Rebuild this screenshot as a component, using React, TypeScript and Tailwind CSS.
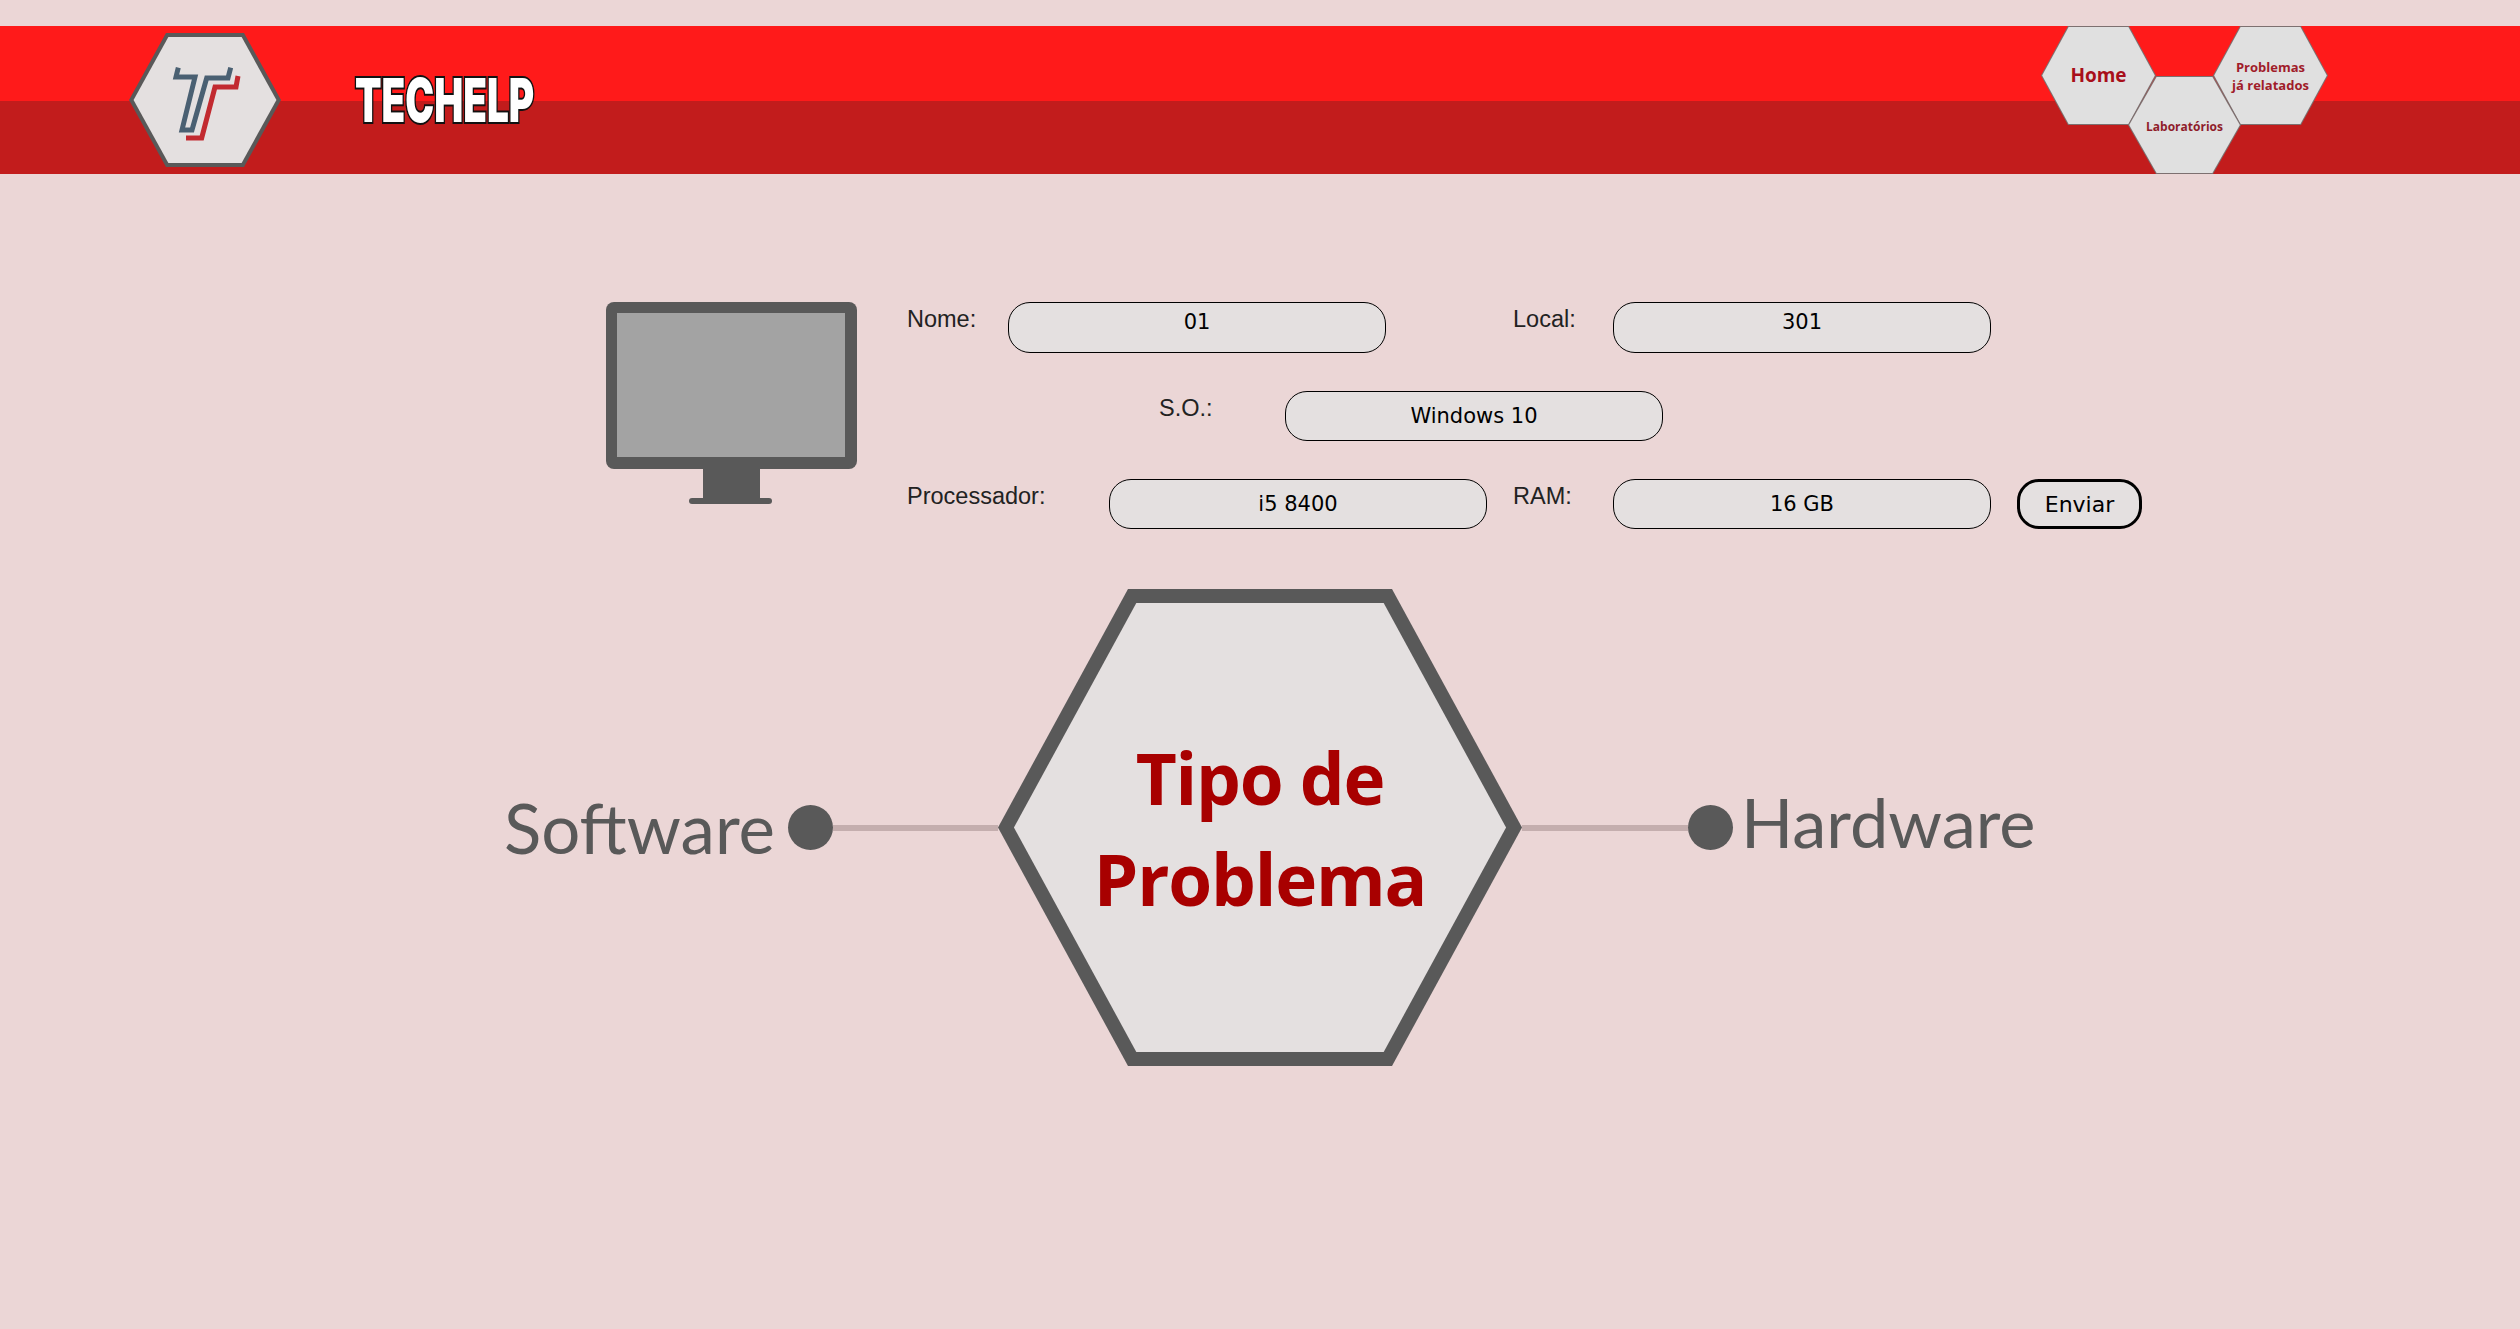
import React from "react";

function Hex({ w, h, inset, s, fill, stroke, className, children }: { w: number; h: number; inset: number; s: number; fill: string; stroke: string; className: string; children?: React.ReactNode }) {
  const b = h / 2;
  const L = Math.sqrt(inset * inset + b * b);
  const lx = (s * L) / b;
  const tx = lx + (inset * (b - s)) / b;
  const outer = `0,${b} ${inset},0 ${w - inset},0 ${w},${b} ${w - inset},${h} ${inset},${h}`;
  const inner = `${lx},${b} ${tx},${s} ${w - tx},${s} ${w - lx},${b} ${w - tx},${h - s} ${tx},${h - s}`;
  return (
    <div className={`relative flex shrink-0 items-center justify-center ${className}`}>
      <svg className="absolute inset-0" width={w} height={h} viewBox={`0 0 ${w} ${h}`}>
        <polygon points={outer} fill={stroke} />
        <polygon points={inner} fill={fill} />
      </svg>
      <div className="relative text-center">{children}</div>
    </div>
  );
}

function Field({ value, className }: { value: string; className: string }) {
  return (
    <div className={`flex shrink-0 items-center justify-center rounded-[22px] border border-black bg-[#e4e0e0] font-['DejaVu_Sans',sans-serif] text-[21px] text-black ${className}`}>
      {value}
    </div>
  );
}

function Label({ children, className }: { children: React.ReactNode; className: string }) {
  return <div className={`shrink-0 font-['Liberation_Sans',sans-serif] text-[23.5px] leading-[28px] text-[#222] ${className}`}>{children}</div>;
}

export default function App() {
  return (
    <div className="min-h-screen overflow-hidden bg-[#ebd6d6] pt-[26px]">
      <header className="flex h-[148px] bg-[linear-gradient(#ff1a1a_0,#ff1a1a_75px,#c21c1c_75px,#c21c1c_100%)]">
        <Hex w={152} h={134} inset={37} s={4} fill="#e4e0e0" stroke="#595959" className="ml-[129px] mt-[7px] h-[134px] w-[152px]">
          <svg width="90" height="90" viewBox="0 0 90 90" fill="none" strokeWidth="5">
            <polyline points="18.3,12.7 16,22 35,22 22,75 32,75 46.7,23 68,23 70.7,12.7" stroke="#4a6072" />
            <polyline points="78,21 76,32 55,32 41.7,83 26,83" stroke="#c22a30" />
          </svg>
        </Hex>
        <div className="ml-[74px] mt-[44px] h-[60px] w-[178px]">
          <span className="inline-block origin-top-left scale-x-[0.645] whitespace-nowrap font-['Inter',sans-serif] text-[60px] font-black leading-[60px] text-white [-webkit-text-stroke:4px_#111] [paint-order:stroke_fill]">
            TECHELP
          </span>
        </div>
        <nav className="ml-auto mr-[192px] flex h-full font-['Open_Sans',sans-serif] font-bold">
          <Hex w={115} h={99} inset={27} s={1} fill="#e0e0e0" stroke="#7d7070" className="h-[99px] w-[115px] self-start">
            <span className="text-[19px] text-[#a80f1a]">Home</span>
          </Hex>
          <Hex w={113} h={98} inset={28} s={1} fill="#e0e0e0" stroke="#7d7070" className="z-10 -ml-[28px] -mr-[28px] h-[98px] w-[113px] self-end">
            <span className="text-[12px] text-[#8f1c2a]">Laboratórios</span>
          </Hex>
          <Hex w={115} h={99} inset={27} s={1} fill="#e0e0e0" stroke="#7d7070" className="h-[99px] w-[115px] self-start">
            <span className="block text-[13px] leading-[18px] text-[#a01c2a]">Problemas<br />já relatados</span>
          </Hex>
        </nav>
      </header>

      <section className="ml-[606px] mt-[128px] flex items-start">
        <svg className="shrink-0" width="251" height="202" viewBox="0 0 251 202">
          <rect x="0" y="0" width="251" height="167" rx="8" fill="#595959" />
          <rect x="11" y="11" width="228" height="144" fill="#a3a3a3" />
          <rect x="97" y="167" width="57" height="30" fill="#595959" />
          <rect x="83" y="196" width="83" height="6" rx="3" fill="#595959" />
        </svg>
        <div className="ml-[50px] flex flex-col">
          <div className="flex h-[51px] items-start">
            <Label className="w-[101px] pt-[3px]">Nome:</Label>
            <Field value="01" className="h-[51px] w-[378px] pb-[9px]" />
            <Label className="ml-[127px] w-[100px] pt-[3px]">Local:</Label>
            <Field value="301" className="h-[51px] w-[378px] pb-[9px]" />
          </div>
          <div className="mt-[38px] flex h-[50px] items-start">
            <Label className="ml-[252px] w-[126px] pt-[3px]">S.O.:</Label>
            <Field value="Windows 10" className="h-[50px] w-[378px] pt-[1px]" />
          </div>
          <div className="mt-[38px] flex h-[50px] items-start">
            <Label className="w-[202px] pt-[3px]">Processador:</Label>
            <Field value="i5 8400" className="h-[50px] w-[378px] pt-[1px]" />
            <Label className="ml-[26px] w-[100px] pt-[3px]">RAM:</Label>
            <Field value="16 GB" className="h-[50px] w-[378px] pt-[1px]" />
            <button className="ml-[26px] h-[50px] w-[125px] rounded-[22px] border-[3px] border-black bg-[#e4e0e0] font-['DejaVu_Sans',sans-serif] text-[22px] text-black">
              Enviar
            </button>
          </div>
        </div>
      </section>

      <section className="mt-[60px] flex items-center pl-[504px] font-['Lato',sans-serif] text-[#595959]">
        <span className="w-[284px] whitespace-nowrap text-[69px] leading-none">Software</span>
        <span className="h-[45px] w-[45px] shrink-0 rounded-full bg-[#595959]" />
        <span className="h-[6px] w-[165px] shrink-0 bg-[#c4aeae]" />
        <Hex w={524} h={477} inset={130} s={14} fill="#e4e0e0" stroke="#595959" className="h-[477px] w-[524px]">
          <span className="block font-['Open_Sans',sans-serif] text-[71px] font-bold leading-[101px] tracking-[-1.2px] text-[#a80000]">Tipo de<br />Problema</span>
        </Hex>
        <span className="h-[6px] w-[166px] shrink-0 bg-[#c4aeae]" />
        <span className="h-[45px] w-[45px] shrink-0 rounded-full bg-[#595959]" />
        <span className="ml-[8px] -translate-y-[5px] whitespace-nowrap text-[68.5px] leading-none">Hardware</span>
      </section>
    </div>
  );
}
